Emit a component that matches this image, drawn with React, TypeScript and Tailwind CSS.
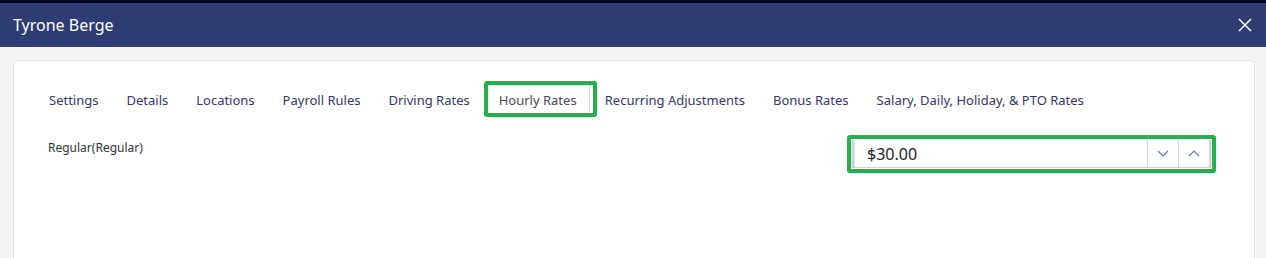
import React from "react";

const tabs = [
  "Settings",
  "Details",
  "Locations",
  "Payroll Rules",
  "Driving Rates",
  "Hourly Rates",
  "Recurring Adjustments",
  "Bonus Rates",
  "Salary, Daily, Holiday, & PTO Rates",
];

export default function App() {
  return (
    <div
      className="w-[1266px] h-[258px] overflow-hidden bg-[#f3f4f5] flex flex-col"
      style={{ fontFamily: '"Noto Sans", "Open Sans", sans-serif' }}
    >
      <div className="h-[3px] bg-[#020626] shrink-0" />
      <div className="h-[44px] shrink-0 bg-[#2e3c74] flex items-center justify-between pl-[13px] pr-[14px]">
        <span className="text-white text-[16px] leading-none">Tyrone Berge</span>
        <svg width="14" height="14" viewBox="0 0 14 14" className="text-white">
          <path d="M1 1 L13 13 M13 1 L1 13" stroke="currentColor" strokeWidth="1.5" />
        </svg>
      </div>
      <div className="pt-[13px] pl-[13px] pr-[11px] shrink-0">
        <div className="h-[240px] bg-white border border-[#e2e3e5] rounded-[5px] pl-[34px] pr-[38px] pt-[20px]">
          <div className="flex items-center text-[13px] text-[#34386a]">
            {tabs.map((t) => {
              if (t === "Hourly Rates") {
                return (
                  <div
                    key={t}
                    className="w-[113px] h-[36px] border-[4px] border-[#22b14c] rounded-[3px] flex items-center pl-[11px] pr-[3px]"
                  >
                    <span className="flex-1 text-[#4a4a5a] h-full flex items-center pt-[3px] border-r border-[#d6d6d6]">
                      {t}
                    </span>
                  </div>
                );
              }
              const pad =
                t === "Settings"
                  ? "pl-[1px] pr-[14px]"
                  : t === "Recurring Adjustments"
                  ? "pl-[8px] pr-[14px]"
                  : "px-[14px]";
              return (
                <div key={t} className={`${pad} h-[36px] pt-[3px] flex items-center`}>
                  {t}
                </div>
              );
            })}
          </div>
          <div className="flex justify-between items-start mt-[18px]">
            <div className="text-[12px] text-[#333] pt-[4px]">Regular(Regular)</div>
            <div className="w-[369px] h-[38px] border-[4px] border-[#22b14c] rounded-[3px] p-[1px]">
              <div className="h-full flex border-x-[2px] border-[#cfd3d8] border-b border-b-[#cfd3d8]">
                <div className="flex-1 flex items-center pl-[12px] text-[16px] text-[#222] border-l border-[#e5e5e5]">
                  $30.00
                </div>
                <div className="w-[31px] flex items-center justify-center border-l border-[#d3d6da]">
                  <svg width="12" height="7" viewBox="0 0 12 7">
                    <path d="M1 1 L6 6 L11 1" fill="none" stroke="#4a86c8" strokeWidth="1.2" />
                  </svg>
                </div>
                <div className="w-[31px] flex items-center justify-center border-l border-[#d3d6da]">
                  <svg width="12" height="7" viewBox="0 0 12 7">
                    <path d="M1 6 L6 1 L11 6" fill="none" stroke="#4a86c8" strokeWidth="1.2" />
                  </svg>
                </div>
              </div>
            </div>
          </div>
        </div>
      </div>
    </div>
  );
}
